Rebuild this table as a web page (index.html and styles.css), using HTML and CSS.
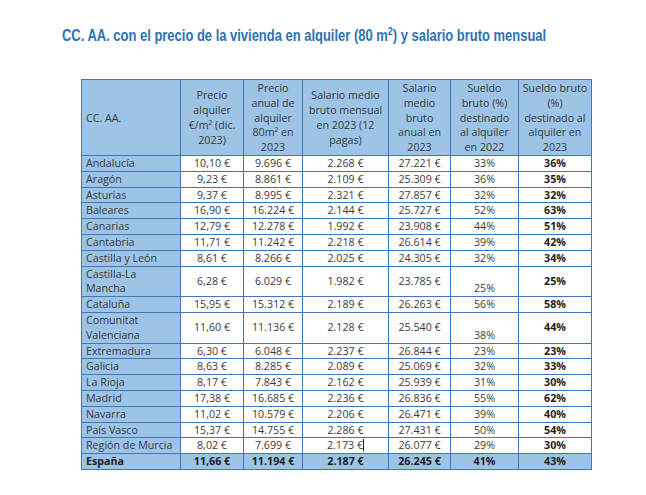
FILE: index.html
```html
<!DOCTYPE html>
<html lang="es">
<head>
<meta charset="utf-8">
<title>CC. AA. alquiler</title>
<link rel="stylesheet" href="styles.css">
</head>
<body>
<div class="page">
<h1 class="title"><span class="narrow">CC. AA. con el precio de la vivienda en alquiler (80 m<sup>2</sup>) y salario bruto mensual</span></h1>
<table class="data">
<colgroup>
<col class="w1"><col class="w2"><col class="w3"><col class="w4"><col class="w5"><col class="w6"><col class="w7">
</colgroup>
<thead>
<tr>
<th class="name">CC. AA.</th>
<th>Precio<br>alquiler<br>€/m² (dic.<br>2023)</th>
<th>Precio<br>anual de<br>alquiler<br>80m² en<br>2023</th>
<th>Salario medio<br>bruto mensual<br>en 2023 (12<br>pagas)</th>
<th>Salario<br>medio<br>bruto<br>anual en<br>2023</th>
<th>Sueldo<br>bruto (%)<br>destinado<br>al alquiler<br>en 2022</th>
<th>Sueldo bruto<br>(%)<br>destinado al<br>alquiler en<br>2023</th>
</tr>
</thead>
<tbody>
<tr><td class="name">Andalucía</td><td>10,10 €</td><td>9.696 €</td><td>2.268 €</td><td>27.221 €</td><td class="bot">33%</td><td class="b">36%</td></tr>
<tr><td class="name">Aragón</td><td>9,23 €</td><td>8.861 €</td><td>2.109 €</td><td>25.309 €</td><td class="bot">36%</td><td class="b">35%</td></tr>
<tr><td class="name">Asturias</td><td>9,37 €</td><td>8.995 €</td><td>2.321 €</td><td>27.857 €</td><td class="bot">32%</td><td class="b">32%</td></tr>
<tr><td class="name">Baleares</td><td>16,90 €</td><td>16.224 €</td><td>2.144 €</td><td>25.727 €</td><td class="bot">52%</td><td class="b">63%</td></tr>
<tr><td class="name">Canarias</td><td>12,79 €</td><td>12.278 €</td><td>1.992 €</td><td>23.908 €</td><td class="bot">44%</td><td class="b">51%</td></tr>
<tr><td class="name">Cantabria</td><td>11,71 €</td><td>11.242 €</td><td>2.218 €</td><td>26.614 €</td><td class="bot">39%</td><td class="b">42%</td></tr>
<tr><td class="name">Castilla y León</td><td>8,61 €</td><td>8.266 €</td><td>2.025 €</td><td>24.305 €</td><td class="bot">32%</td><td class="b">34%</td></tr>
<tr><td class="name">Castilla-La<br>Mancha</td><td>6,28 €</td><td>6.029 €</td><td>1.982 €</td><td>23.785 €</td><td class="bot">25%</td><td class="b">25%</td></tr>
<tr><td class="name">Cataluña</td><td>15,95 €</td><td>15.312 €</td><td>2.189 €</td><td>26.263 €</td><td class="bot">56%</td><td class="b">58%</td></tr>
<tr><td class="name">Comunitat<br>Valenciana</td><td>11,60 €</td><td>11.136 €</td><td>2.128 €</td><td>25.540 €</td><td class="bot">38%</td><td class="b">44%</td></tr>
<tr><td class="name">Extremadura</td><td>6,30 €</td><td>6.048 €</td><td>2.237 €</td><td>26.844 €</td><td class="bot">23%</td><td class="b">23%</td></tr>
<tr><td class="name">Galicia</td><td>8,63 €</td><td>8.285 €</td><td>2.089 €</td><td>25.069 €</td><td class="bot">32%</td><td class="b">33%</td></tr>
<tr><td class="name">La Rioja</td><td>8,17 €</td><td>7.843 €</td><td>2.162 €</td><td>25.939 €</td><td class="bot">31%</td><td class="b">30%</td></tr>
<tr><td class="name">Madrid</td><td>17,38 €</td><td>16.685 €</td><td>2.236 €</td><td>26.836 €</td><td class="bot">55%</td><td class="b">62%</td></tr>
<tr><td class="name">Navarra</td><td>11,02 €</td><td>10.579 €</td><td>2.206 €</td><td>26.471 €</td><td class="bot">39%</td><td class="b">40%</td></tr>
<tr><td class="name">País Vasco</td><td>15,37 €</td><td>14.755 €</td><td>2.286 €</td><td>27.431 €</td><td class="bot">50%</td><td class="b">54%</td></tr>
<tr><td class="name">Región de Murcia</td><td>8,02 €</td><td>7.699 €</td><td>2.173 €<span class="caret"></span></td><td>26.077 €</td><td class="bot">29%</td><td class="b">30%</td></tr>
<tr class="total"><td class="name">España</td><td>11,66 €</td><td>11.194 €</td><td>2.187 €</td><td>26.245 €</td><td class="bot">41%</td><td>43%</td></tr>
</tbody>
</table>
</div>
</body>
</html>
```
FILE: styles.css
```css
html, body {
  margin: 0;
  background: #ffffff;
}
.page {
  padding: 27px 0 0 62px;
}
.title {
  margin: 0;
  font-family: "Liberation Sans", Arial, sans-serif;
  font-weight: bold;
  font-size: 16px;
  line-height: 18px;
  color: #2b72b6;
  white-space: nowrap;
}
.narrow {
  display: inline-block;
  transform: scaleX(0.81);
  transform-origin: 0 50%;
}
.title sup {
  font-size: 11px;
  line-height: 0;
  vertical-align: 6px;
}
.data {
  margin: 34px 0 0 19px;
  border-collapse: collapse;
  table-layout: fixed;
  width: 511px;
  font-family: "Open Sans", sans-serif;
  font-size: 10.7px;
  line-height: 14.8px;
  color: #3a3a3a;
}
.w1 { width: 99px; }
.w2 { width: 63px; }
.w3 { width: 59px; }
.w4 { width: 86px; }
.w5 { width: 62px; }
.w6 { width: 68px; }
.w7 { width: 73px; }
.data th,
.data td {
  border: 1px solid #3f78b5;
  padding: 0 2px;
  text-align: center;
  vertical-align: middle;
  white-space: nowrap;
  overflow: hidden;
}
.data th {
  background: #9dc3e6;
  font-weight: normal;
  padding-top: 1px;
  padding-bottom: 0;
}
.data .name {
  text-align: left;
  background: #9dc3e6;
  padding-left: 4px;
}
.data td.bot {
  vertical-align: bottom;
}
.data td.b {
  font-weight: bold;
  color: #1e1e1e;
}
.data tr.total td {
  background: #9dc3e6;
  font-weight: bold;
  color: #1e1e1e;
}
.caret {
  display: inline-block;
  width: 1px;
  height: 12px;
  background: #222;
  vertical-align: -2px;
}
```
